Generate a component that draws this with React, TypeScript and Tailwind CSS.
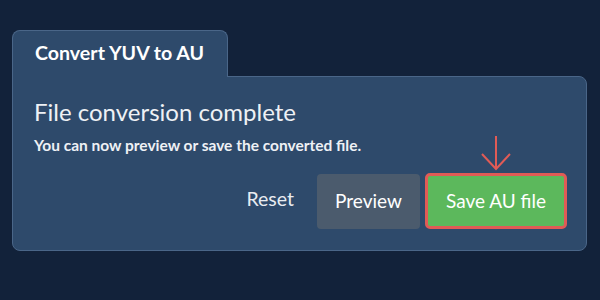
import React from "react";

export default function App() {
  return (
    <div className="w-[600px] h-[300px] bg-[#12223a] pt-[30px] px-[12px]" style={{ fontFamily: "Lato, 'Open Sans', sans-serif" }}>
      <div className="flex flex-col w-[575px]">
        <div className="relative z-10 w-[216px] h-[47px] -mb-px bg-[#2e4a6b] border border-b-0 border-[#4a6688] rounded-t-[8px] pl-[22px] pt-[10px]">
          <span className="text-white font-bold text-[19.6px] leading-[24px]">Convert YUV to AU</span>
        </div>
        <div className="h-[175px] bg-[#2e4a6b] border border-[#4a6688] rounded-b-[8px] rounded-tr-[8px] pl-[21px] pr-[19px] pt-[20px]">
          <div className="text-[#eef1f5] text-[24px] leading-[30px]">File conversion complete</div>
          <div className="text-[#eef1f5] font-bold text-[15.5px] leading-[18px] mt-[9px]">You can now preview or save the converted file.</div>
          <div className="flex justify-end items-center gap-[5px] mt-[19px]">
            <span className="text-[#e8ecf1] text-[19.5px] mr-[18px] -mt-[5px]">Reset</span>
            <button className="w-[103px] h-[55px] rounded-[4px] bg-[#4b5b6d] text-white text-[19px] font-normal">Preview</button>
            <div className="relative">
              <svg className="absolute left-1/2 -translate-x-1/2 -top-[38px]" width="32" height="36" viewBox="0 0 32 36" fill="none" stroke="#e05b56" strokeWidth="2">
                <path d="M16 1 V34" />
                <path d="M2 19 L16 34 L30 19" />
              </svg>
              <button className="w-[142px] h-[56px] rounded-[5px] border-[3px] border-[#e05b56] bg-[#5cb85c] text-white text-[19px] font-normal">Save AU file</button>
            </div>
          </div>
        </div>
      </div>
    </div>
  );
}
